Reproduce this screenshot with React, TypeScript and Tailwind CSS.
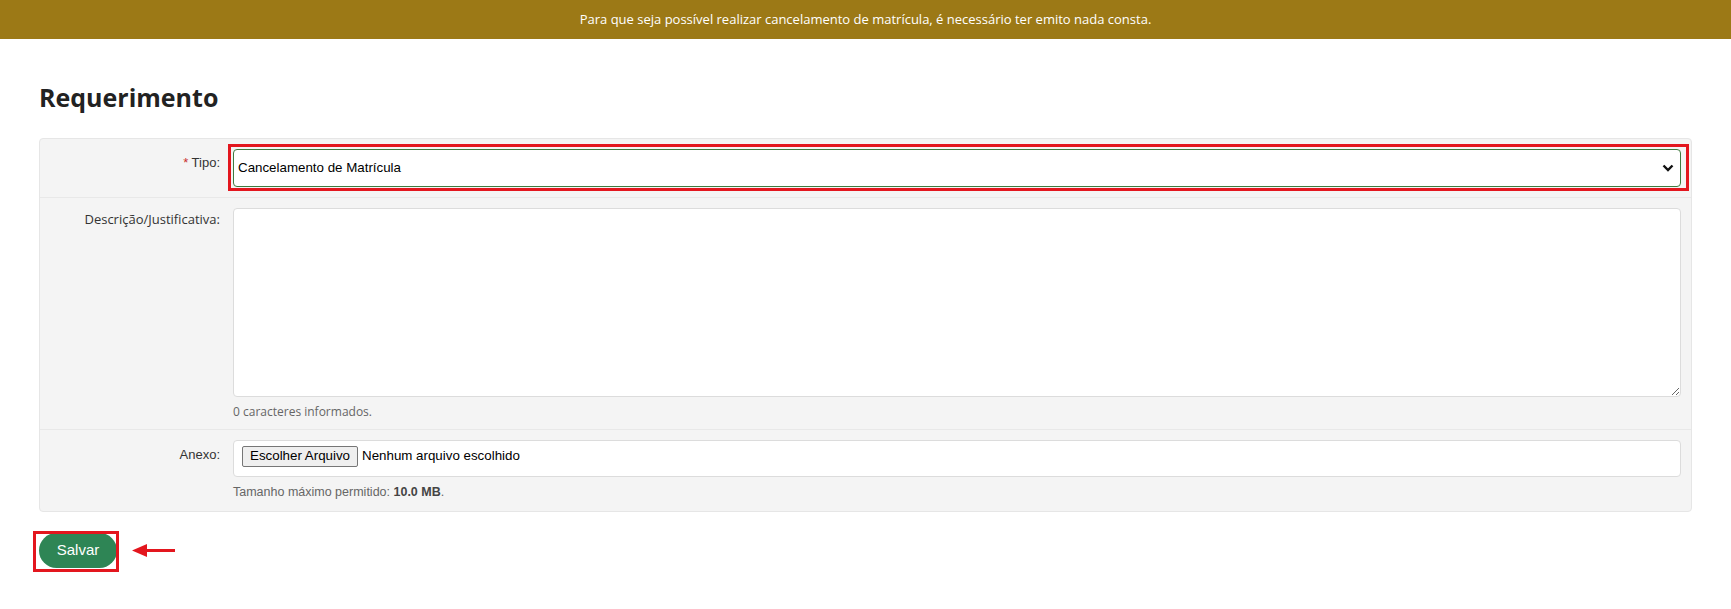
import { useState } from "react";

const sans = "font-['Open_Sans',sans-serif]";
const arial = "font-['Liberation_Sans',Arial,sans-serif]";

function RedBox({ className }: { className: string }) {
  return <div className={`pointer-events-none absolute border-[3px] border-[#e3161e] ${className}`} />;
}

function Row({
  label,
  labelClass,
  children,
  last = false,
}: {
  label: React.ReactNode;
  labelClass: string;
  children: React.ReactNode;
  last?: boolean;
}) {
  return (
    <div className={`flex pr-[10px] ${last ? "" : "border-b border-[#e8e8e8]"}`}>
      <div className={`w-[180px] shrink-0 text-right text-[13px] text-[#333] ${labelClass}`}>{label}</div>
      <div className="ml-[13px] flex-1">{children}</div>
    </div>
  );
}

export default function App() {
  const [text, setText] = useState("");

  return (
    <div className="min-h-[609px] bg-white">
      <div className={`flex h-[39px] items-center justify-center bg-[#9c7916] text-[13px] text-white ${sans}`}>
        Para que seja possível realizar cancelamento de matrícula, é necessário ter emito nada consta.
      </div>

      <div className="px-[39px]">
        <h1 className={`mt-[42px] mb-[25px] text-[25px] leading-[32px] font-bold text-[#222] ${sans}`}>
          Requerimento
        </h1>

        <div className="rounded-[4px] border border-[#e6e6e6] bg-[#f4f4f4]">
          <Row
            labelClass={`pt-[14px] text-[13.5px] text-[#222] ${arial}`}
            label={
              <>
                <span className="text-[#c9302c]">*</span> Tipo:
              </>
            }
          >
            <div className="py-[10px]">
              <div className="relative">
                <RedBox className="-left-[5px] -right-[8px] -top-[5px] -bottom-[4px]" />
                <div
                  className={`flex h-[38px] items-center justify-between rounded-[4px] border border-[#3f7a3f] bg-white pr-[6px] pl-[4px] text-[13.33px] text-black ${arial}`}
                >
                  <span>Cancelamento de Matrícula</span>
                  <svg width="12" height="8" viewBox="0 0 12 8">
                    <path d="M1.5 1.5 L6 6 L10.5 1.5" fill="none" stroke="#111" strokeWidth="2.4" />
                  </svg>
                </div>
              </div>
            </div>
          </Row>

          <Row labelClass={`pt-[12px] ${sans}`} label="Descrição/Justificativa:">
            <div className="pt-[10px] pb-[9px]">
              <textarea
                value={text}
                onChange={(e) => setText(e.target.value)}
                className="block h-[189px] w-full rounded-[4px] border border-[#dcdcdc] bg-white p-1 text-[13px] outline-none"
              />
              <div className={`mt-[7px] text-[12px] leading-[16px] text-[#666] ${sans}`}>
                {text.length} caracteres informados.
              </div>
            </div>
          </Row>

          <Row labelClass={`pt-[15px] ${arial}`} label="Anexo:" last>
            <div className="pt-[10px] pb-[11px]">
              <div
                className={`flex h-[37px] items-center rounded-[4px] border border-[#dcdcdc] bg-white pl-[8px] text-[13.33px] text-black ${arial}`}
              >
                <span className="mb-[5px] flex h-[21px] items-center rounded-[2px] border border-[#767676] bg-[#efefef] px-[7px]">
                  Escolher Arquivo
                </span>
                <span className="mb-[5px] ml-[4px]">Nenhum arquivo escolhido</span>
              </div>
              <div className={`mt-[8px] text-[12.5px] leading-[15px] text-[#666] ${arial}`}>
                Tamanho máximo permitido: <b className="text-[#444]">10.0 MB</b>.
              </div>
            </div>
          </Row>
        </div>

        <div className="mt-[21px] flex items-center">
          <div className="relative">
            <RedBox className="-left-[6px] -right-[2px] -top-[2px] -bottom-[4px]" />
            <button
              className={`flex h-[35px] w-[78px] items-center justify-center rounded-full bg-[#2e8555] text-[15px] text-white ${arial}`}
            >
              Salvar
            </button>
          </div>
          <svg className="ml-[15px]" width="43" height="15" viewBox="0 0 43 15">
            <path d="M12 7.5 H43" stroke="#e3161e" strokeWidth="3" />
            <path d="M0 7.5 L15 1 L15 14 Z" fill="#e3161e" />
          </svg>
        </div>
      </div>
    </div>
  );
}
